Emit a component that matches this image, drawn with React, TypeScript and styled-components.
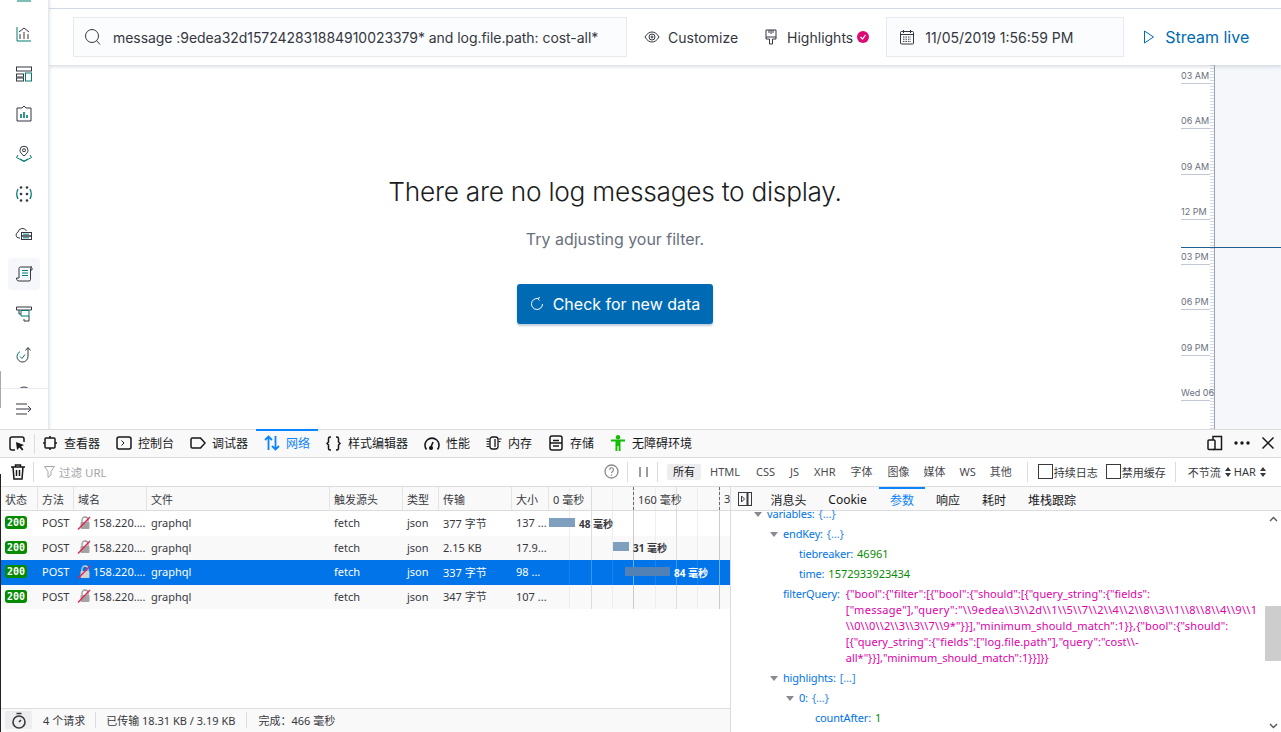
import React from "react";
import styled, { createGlobalStyle } from "styled-components";

const ui = `Inter, "Noto Sans CJK SC", sans-serif`;
const dev = `"Noto Sans", "Noto Sans CJK SC", sans-serif`;

const Global = createGlobalStyle`
  html, body { margin: 0; padding: 0; background: #fff; overflow: hidden; }
  * { box-sizing: border-box; }
`;

const Page = styled.div`
  position: relative;
  width: 1281px;
  height: 732px;
  display: flex;
  flex-direction: column;
  overflow: hidden;
`;

/* ---------- kibana ---------- */
const Kibana = styled.section`
  height: 429px;
  display: flex;
`;

const Sidebar = styled.nav`
  position: relative;
  width: 49px;
  height: 429px;
  display: flex;
  flex-direction: column;
  border-right: 1px solid #e4e7ee;
  box-shadow: 1px 0 3px rgba(152, 162, 179, 0.25);
  z-index: 3;
  background: #fff;
  &::before {
    content: "";
    position: absolute;
    left: 0;
    top: 371px;
    width: 1px;
    height: 37px;
    background: #aaa;
  }
`;

const SideList = styled.div`
  flex: 1;
  overflow: hidden;
  display: flex;
  flex-direction: column;
  align-items: center;
`;

const SideItem = styled.div<{ $active?: boolean; $first?: boolean }>`
  flex: none;
  width: 32px;
  height: 32px;
  margin-top: ${(p) => (p.$first ? "-22px" : "0")};
  margin-bottom: 8px;
  display: flex;
  align-items: center;
  justify-content: center;
  border-radius: 4px;
  background: ${(p) => (p.$active ? "#f5f7fa" : "transparent")};
`;

const SideFoot = styled.div`
  height: 41px;
  border-top: 1px solid #e9ecf2;
  display: flex;
  align-items: center;
  justify-content: center;
`;

const Content = styled.div`
  flex: 1;
  display: flex;
  flex-direction: column;
  min-width: 0;
`;

const TopGap = styled.div`
  height: 9px;
  border-bottom: 1px solid #d3dae6;
`;

const Toolbar = styled.div`
  height: 56px;
  flex: none;
  display: flex;
  align-items: center;
  padding: 0 0 0 24px;
  box-shadow: 0 2px 3px rgba(152, 162, 179, 0.35);
  z-index: 2;
  background: #fff;
  font-family: ${ui};
  font-size: 14px;
  color: #343741;
`;

const SearchBox = styled.div`
  width: 554px;
  height: 40px;
  background: #fbfcfd;
  border: 1px solid #e6e9f0;
  display: flex;
  align-items: center;
  gap: 11px;
  padding-left: 10px;
  white-space: nowrap;
  letter-spacing: -0.05px;
`;

const ToolButton = styled.div<{ $left: number }>`
  display: flex;
  align-items: center;
  margin-left: ${(p) => p.$left}px;
  gap: 8px;
  white-space: nowrap;
`;

const Dot = styled.span`
  width: 12px;
  height: 12px;
  border-radius: 50%;
  background: #dd0a73;
  margin-left: -4px;
  display: flex;
  align-items: center;
  justify-content: center;
`;

const DateBox = styled.div`
  width: 238px;
  height: 40px;
  margin-left: 17px;
  background: #fbfcfd;
  border: 1px solid #e6e9f0;
  display: flex;
  align-items: center;
  gap: 10px;
  padding-left: 12px;
  white-space: nowrap;
`;

const StreamLive = styled.div`
  display: flex;
  align-items: center;
  gap: 10px;
  margin-left: 19px;
  color: #006bb4;
  font-size: 16px;
  white-space: nowrap;
`;

const Body = styled.div`
  flex: 1;
  display: flex;
  min-height: 0;
`;

const EmptyState = styled.div`
  flex: 1;
  display: flex;
  flex-direction: column;
  align-items: center;
  padding-top: 109px;
  font-family: ${ui};
`;

const EmptyTitle = styled.h2`
  margin: 0;
  font-weight: 300;
  font-size: 26.25px;
  line-height: 36px;
  letter-spacing: -0.25px;
  color: #1a1c21;
`;

const EmptyHint = styled.p`
  margin: 17px 0 0;
  font-size: 16px;
  line-height: 24px;
  letter-spacing: -0.02px;
  color: #69707d;
`;

const PrimaryButton = styled.button`
  width: 196px;
  height: 40px;
  margin-top: 33px;
  border: 0;
  border-radius: 3px;
  background: #006bb4;
  color: #fff;
  font: 400 16px ${ui};
  display: flex;
  align-items: center;
  justify-content: center;
  gap: 9px;
  box-shadow: 0 2px 2px rgba(0, 60, 110, 0.25);
`;

const Timeline = styled.aside`
  position: relative;
  width: 100px;
  display: flex;
`;

const Ruler = styled.div`
  width: 34px;
  padding-top: 1px;
  border-right: 1px solid #98a2b3;
  background: repeating-linear-gradient(to bottom, #d3dae6 0 1px, transparent 1px 3px) right top / 4px 100% no-repeat;
  overflow: hidden;
`;

const Tick = styled.div<{ $first?: boolean }>`
  height: ${(p) => (p.$first ? "18px" : "45.3px")};
  width: 29px;
  border-bottom: 1px solid #c2c8d3;
  display: flex;
  align-items: flex-end;
  padding-bottom: 2px;
  font: 400 9px ${ui};
  color: #69707d;
  white-space: nowrap;
`;

const Minimap = styled.div`
  flex: 1;
  background: #f5f7fa;
`;

const Cursor = styled.div`
  position: absolute;
  left: 0;
  right: 0;
  top: 182px;
  height: 1px;
  background: #1f5f8f;
`;

/* ---------- devtools ---------- */
const Devtools = styled.section`
  flex: 1;
  display: flex;
  flex-direction: column;
  min-height: 0;
  border-top: 1px solid #dcdcde;
  font-family: ${dev};
  font-size: 12px;
  color: #38383d;
  position: relative;
  z-index: 4;
  background: #fff;
`;

const TabBar = styled.div`
  height: 28px;
  background: #f9f9fa;
  border-bottom: 1px solid #dcdcde;
  display: flex;
  align-items: stretch;
`;

const Picker = styled.div`
  width: 34px;
  padding-left: 9px;
  display: flex;
  align-items: center;
`;

const VRule = styled.span<{ $h?: number; $mx?: number }>`
  flex: none;
  width: 1px;
  height: ${(p) => p.$h ?? 20}px;
  background: #dcdcde;
  margin: 0 ${(p) => p.$mx ?? 0}px;
  align-self: center;
`;

const Tab = styled.div<{ $active?: boolean; $w: number }>`
  width: ${(p) => p.$w}px;
  padding: 0 0 2px 8px;
  display: flex;
  align-items: center;
  gap: 6px;
  white-space: nowrap;
  font-size: 12px;
  color: ${(p) => (p.$active ? "#0a84ff" : "#18181a")};
  border-top: 2px solid ${(p) => (p.$active ? "#0a84ff" : "transparent")};
  margin-top: -1px;
`;

const TabEnd = styled.div`
  margin-left: auto;
  display: flex;
  align-items: center;
  gap: 11px;
  padding: 0 6px 1px 0;
`;

const FilterBar = styled.div`
  position: relative;
  height: 29px;
  border-bottom: 1px solid #dcdcde;
  display: flex;
  align-items: center;
  padding: 0 0 1px 11px;
  white-space: nowrap;
  &::after {
    content: "";
    position: absolute;
    left: 0;
    bottom: -1px;
    width: 1px;
    height: 13px;
    background: #222;
  }
`;

const FilterInput = styled.div`
  width: 560px;
  margin-left: 2px;
  display: flex;
  align-items: center;
  gap: 4px;
  color: #a4a4a8;
  font-size: 11.5px;
`;

const Pill = styled.span<{ $on?: boolean; $ml?: number }>`
  margin-left: ${(p) => p.$ml ?? 0}px;
  padding: 0 6px;
  height: 16px;
  line-height: 16px;
  border-radius: 2px;
  font-size: 11px;
  background: ${(p) => (p.$on ? "#ededf0" : "transparent")};
  color: ${(p) => (p.$on ? "#18181a" : "#4a4a4f")};
`;

const Check = styled.label<{ $ml: number }>`
  margin-left: ${(p) => p.$ml}px;
  display: flex;
  align-items: center;
  gap: 1px;
  font-size: 11px;
  color: #38383d;
  &::before {
    content: "";
    flex: none;
    width: 13px;
    height: 13px;
    border: 1px solid #38383d;
    background: #fff;
  }
`;

const Throttle = styled.span<{ $ml: number }>`
  margin-left: ${(p) => p.$ml}px;
  display: flex;
  align-items: center;
  gap: 4px;
  font-size: 11px;
`;

const Split = styled.div`
  flex: 1;
  display: flex;
  min-height: 0;
`;

const Requests = styled.div`
  width: 731px;
  flex: none;
  display: flex;
  flex-direction: column;
  border-right: 1px solid #dcdcde;
  border-left: 1px solid #222;
`;

const cols = "37px 36px 73px 183px 73px 36px 73px 37px 1fr";

const HeadRow = styled.div`
  height: 24px;
  flex: none;
  display: grid;
  grid-template-columns: ${cols};
  background: #f9f9fa;
  border-bottom: 1px solid #dcdcde;
  font-size: 11px;
`;

const HeadCell = styled.div`
  padding-left: 4px;
  display: flex;
  align-items: center;
  border-right: 1px solid #e4e4e6;
  white-space: nowrap;
  overflow: hidden;
`;

const Gridlines = styled.div<{ $sel?: boolean }>`
  position: relative;
  overflow: hidden;
  display: flex;
  align-items: center;
  height: 100%;
  min-width: 0;
  background:
    repeating-linear-gradient(to right, transparent 0 41.67px, ${(p) => (p.$sel ? "rgba(255,255,255,.16)" : "#dcdcdc")} 41.67px 42.67px),
    repeating-linear-gradient(to right, transparent 0 20.33px, ${(p) => (p.$sel ? "rgba(255,255,255,.1)" : "#eeeeee")} 20.33px 21.33px);
`;

const Mark = styled.span<{ $x: number; $head?: boolean; $sel?: boolean }>`
  position: absolute;
  top: 0;
  bottom: 0;
  left: ${(p) => p.$x}px;
  border-left: 1px ${(p) => (p.$head ? "dashed #6a6a6f" : p.$sel ? "solid rgba(255,255,255,.25)" : "solid #cccccc")};
`;

const TimeLabel = styled.span<{ $x: number }>`
  position: absolute;
  left: ${(p) => p.$x}px;
  top: 0;
  bottom: 0;
  padding-left: 4px;
  display: flex;
  align-items: center;
  white-space: nowrap;
`;

const Rows = styled.div`
  flex: 1;
  min-height: 0;
`;

const Row = styled.div<{ $sel?: boolean; $alt?: boolean }>`
  height: 24.5px;
  display: grid;
  grid-template-columns: ${cols};
  align-items: stretch;
  font-size: 11px;
  color: ${(p) => (p.$sel ? "#fff" : "#38383d")};
  background: ${(p) => (p.$sel ? "#0074e8" : p.$alt ? "#f9f9fa" : "#fff")};
`;

const Cell = styled.div<{ $flush?: boolean }>`
  padding: 0 0 1px ${(p) => (p.$flush ? 0 : 4)}px;
  display: flex;
  align-items: center;
  white-space: nowrap;
  overflow: hidden;
  min-width: 0;
`;

const Status = styled.span`
  width: 22px;
  height: 13px;
  border-radius: 3px;
  background: #058b00;
  color: #fff;
  font: 700 10px "DejaVu Sans Mono", monospace;
  line-height: 13px;
  text-align: center;
`;

const Bar = styled.span<{ $x: number; $w: number; $sel?: boolean }>`
  position: relative;
  flex: none;
  width: ${(p) => p.$w}px;
  height: 9px;
  margin-left: ${(p) => p.$x}px;
  margin-top: -2px;
  background: ${(p) => (p.$sel ? "#5281b6" : "#7f9fbf")};
`;

const BarLabel = styled.span<{ $sel?: boolean }>`
  position: relative;
  margin-left: 4px;
  font-size: 10px;
  font-weight: 700;
  color: ${(p) => (p.$sel ? "#fff" : "#38383d")};
`;

const Footer = styled.div`
  height: 24px;
  flex: none;
  background: #f9f9fa;
  border-top: 1px solid #dcdcde;
  display: flex;
  align-items: center;
  font-size: 11px;
  padding: 0 0 1px 4px;
  white-space: nowrap;
`;

const Watch = styled.span`
  width: 27px;
  height: 18px;
  background: #ededf0;
  border-radius: 2px;
  display: flex;
  align-items: center;
  justify-content: center;
  margin-right: 11px;
`;

const Details = styled.div`
  flex: 1;
  min-width: 0;
  display: flex;
  flex-direction: column;
`;

const DetailTabs = styled.div`
  height: 24px;
  flex: none;
  background: #f9f9fa;
  border-bottom: 1px solid #dcdcde;
  display: flex;
  align-items: stretch;
  font-size: 12px;
  padding-left: 7px;
`;

const DetailTab = styled.div<{ $active?: boolean; $w: number }>`
  width: ${(p) => p.$w}px;
  display: flex;
  align-items: center;
  justify-content: center;
  color: ${(p) => (p.$active ? "#0a84ff" : "#18181a")};
  border-top: 2px solid ${(p) => (p.$active ? "#0a84ff" : "transparent")};
  white-space: nowrap;
`;

const TreeWrap = styled.div`
  flex: 1;
  display: flex;
  min-height: 0;
`;

const Tree = styled.div`
  flex: 1;
  overflow: hidden;
  font-size: 11px;
  margin-top: -7px;
`;

const Scroll = styled.div`
  width: 16px;
  display: flex;
  flex-direction: column;
  align-items: center;
  padding: 5px 0 3px;
`;

const Thumb = styled.div`
  width: 16px;
  height: 55px;
  margin: 84px 0 auto;
  background: #cdcdcd;
`;

const TreeRow = styled.div<{ $level: number }>`
  display: flex;
  align-items: flex-start;
  padding: 2px 0 2px ${(p) => 23 + p.$level * 16}px;
  line-height: 16px;
  white-space: nowrap;
`;

const Twisty = styled.span<{ $open?: boolean }>`
  flex: none;
  width: 13px;
  height: 16px;
  display: flex;
  align-items: center;
  &::before {
    content: "";
    display: ${(p) => (p.$open ? "block" : "none")};
    border-left: 4px solid transparent;
    border-right: 4px solid transparent;
    border-top: 5px solid #8a8a8e;
  }
`;

const Key = styled.span`
  color: #0074e8;
  margin-right: 4px;
  letter-spacing: -0.18px;
`;

const Num = styled.span`
  color: #058b00;
`;

const Json = styled.span`
  color: #dd00a9;
  margin-left: 2px;
`;

const Brace = styled.span`
  color: #2f86ec;
`;

const JsonLine = styled.div<{ $sp: number }>`
  letter-spacing: ${(p) => p.$sp}px;
`;

/* ---------- icons ---------- */
const D = "#343741";
const T = "#017d73";

type Ic = { children: React.ReactNode; s?: number; vb?: number };
const Svg = ({ children, s = 18, vb = 18 }: Ic) => (
  <svg width={s} height={s} viewBox={`0 0 ${vb} ${vb}`} fill="none" stroke={D} strokeWidth="1">
    {children}
  </svg>
);

const sideIcons: React.ReactNode[] = [
  <Svg key="a"><circle cx="9" cy="6" r="5" /><path d="M2 16h14" stroke={T} /></Svg>,
  <Svg key="b"><path d="M2 2v14h14" stroke={T} /><path d="M5 14V9M9 14V7M13 14V9M4 7l5-4 5 4" /></Svg>,
  <Svg key="c"><rect x="1.5" y="2" width="15" height="4" /><rect x="1.5" y="9" width="7" height="3" /><rect x="1.5" y="13" width="7" height="3" /><rect x="10.5" y="8" width="6" height="8" stroke={T} /></Svg>,
  <Svg key="d"><path d="M9 1l2 2h5v13H2V3h5z" /><path d="M6 13V9M9 13V7M12 13v-3" stroke={T} strokeWidth="1.6" /></Svg>,
  <Svg key="e"><path d="M9 11C6 8.5 5 7 5 5.2a4 4 0 018 0C13 7 12 8.5 9 11z" /><circle cx="9" cy="5.2" r="1.5" /><path d="M3 10L1.5 12.5 9 16.5l7.5-4L15 10M5 14l4 2 4-2" stroke={T} /></Svg>,
  <Svg key="f"><g fill={D} stroke="none"><circle cx="6" cy="2.5" r="1.3" /><circle cx="12" cy="2.5" r="1.3" /><circle cx="6" cy="9" r="1.3" /><circle cx="12" cy="9" r="1.3" /><circle cx="6" cy="15.5" r="1.3" /><circle cx="12" cy="15.5" r="1.3" /></g><path d="M3 4C1.500 7 1.500 11 3 14M15 4c1.500 3 1.500 7 0 10" stroke={T} strokeWidth="1.3" /></Svg>,
  <Svg key="g"><path d="M5 13H4a3 3 0 01-1-5.800A4.500 4.500 0 0111.500 6" /><rect x="6.5" y="7.5" width="10" height="3.5" /><rect x="6.5" y="11" width="10" height="3.5" /><path d="M8 9.2h6M8 12.8h6" stroke={T} /></Svg>,
  <Svg key="h"><path d="M4 16h10a1.500 1.500 0 001.500-1.500V3.500A1.500 1.500 0 0117 2H5.500A1.500 1.500 0 004 3.500V13H1.500c0 2 1 3 2.500 3zM15.500 5H17V3" /><path d="M7 5.500h6M7 8h6M7 10.500h6" stroke={T} /></Svg>,
  <Svg key="i"><path d="M1.500 2h15v3h-15zM4 5v4h2" /><path d="M6 5.500h8v5.500H6z" stroke={T} /><path d="M14 11v5H9v-2" /></Svg>,
  <Svg key="j"><path d="M13 3v8.500a5.500 5.500 0 01-11 0" /><path d="M2 11.500a5.500 5.500 0 013-4.900" stroke={T} /><path d="M10.500 5.500L13 2.500l2.500 3" /><path d="M5 11.500l2 2 3-4" stroke={T} /></Svg>,
  <Svg key="k"><circle cx="9" cy="9" r="7" /></Svg>,
];

const Search = () => (
  <Svg s={18}>
    <circle cx="8" cy="8" r="6.5" />
    <path d="M12.5 12.5l3.500 4" />
  </Svg>
);

const LockOff = ({ sel }: { sel?: boolean }) => (
  <svg width="15" height="14" viewBox="0 0 15 14" style={{ flex: "none", marginRight: 1, marginLeft: 3 }}>
    <path d="M5 6V4a3 3 0 016 0v2" fill="none" stroke={sel ? "#d0d0d0" : "#9a9a9a"} strokeWidth="1.3" />
    <rect x="3.5" y="6" width="9" height="7" rx="1" fill={sel ? "#d0d0d0" : "#a3a3a3"} />
    <path d="M1 13.5L13 1" stroke="#e22850" strokeWidth="1.4" />
  </svg>
);

const Tools = {
  inspector: (
    <svg width="15" height="14" viewBox="0 0 15 14" fill="none" stroke="#18181a" strokeWidth="1.500"><rect x="2" y="2" width="10" height="10" rx="1" /><path d="M7 0v2M7 12v2M0 7h2M12 7h2" /></svg>
  ),
  console: (
    <svg width="16" height="14" viewBox="0 0 16 14" fill="none" stroke="#18181a" strokeWidth="1.500"><rect x="1" y="1" width="14" height="12" rx="2" /><path d="M5.500 4.500L8 7l-2.500 2.500" strokeWidth="1" /></svg>
  ),
  debugger: (
    <svg width="16" height="12" viewBox="0 0 16 12" fill="none" stroke="#18181a" strokeWidth="1.500"><path d="M2.500 1h8L15 6l-4.500 5h-8A1.500 1.500 0 011 9.500v-7A1.500 1.500 0 012.500 1z" /></svg>
  ),
  network: (
    <svg width="16" height="16" viewBox="0 0 16 16" fill="none" stroke="#0a84ff" strokeWidth="1.800"><path d="M4.500 15V2M1 5l3.500-3.500L8 5M11.500 1v13M8 11l3.500 3.500L15 11" /></svg>
  ),
  style: (
    <svg width="16" height="15" viewBox="0 0 16 15" fill="none" stroke="#18181a" strokeWidth="1.500"><path d="M5 1H4C2.500 1 2.500 2 2.500 3v3L1 7.500 2.500 9v3c0 1 0 2 1.500 2h1M10 1h1c1.500 0 1.500 1 1.500 2v3L14 7.500 12.500 9v3c0 1 0 2-1.500 2h-1" /></svg>
  ),
  perf: (
    <svg width="16" height="15" viewBox="0 0 16 15" fill="none" stroke="#18181a" strokeWidth="1.600"><path d="M2.500 13.500A7 7 0 1113.500 13.500" /><path d="M7 11l2-5" /><circle cx="7" cy="12" r="1.300" fill="#18181a" /></svg>
  ),
  memory: (
    <svg width="16" height="14" viewBox="0 0 16 14" fill="none" stroke="#18181a" strokeWidth="1.300"><rect x="4" y="1" width="8" height="12" rx="2.500" /><path d="M9 3v8" /><path d="M0.500 3h3M0.500 5.500h3M0.500 8h3M0.500 10.500h3M12.500 3h3M12.500 5.500h2" strokeWidth="1" /></svg>
  ),
  storage: (
    <svg width="15" height="16" viewBox="0 0 15 16" fill="none" stroke="#18181a" strokeWidth="1.500"><rect x="1" y="1" width="12" height="14" rx="2" /><path d="M4 5.500h6M1 8h12M4 11h6" /></svg>
  ),
  a11y: (
    <svg width="15" height="16" viewBox="0 0 15 16" fill="#12bc00"><circle cx="7" cy="2.200" r="2.200" /><path d="M0 4.500h14v2h-4.500V16H7.600v-5H6.400v5H4.500V6.500H0z" /></svg>
  ),
};

const UpDown = () => (
  <svg width="6" height="10" viewBox="0 0 6 10" fill="#38383d"><path d="M3 0l3 4H0zM3 10L0 6h6z" /></svg>
);

const Chevron = ({ down }: { down?: boolean }) => (
  <svg width="9" height="6" viewBox="0 0 9 6" fill="none" stroke="#555" strokeWidth="1.400">
    <path d={down ? "M1 1l3.500 3.500L8 1" : "M1 5l3.500-3.500L8 5"} />
  </svg>
);

const waterfall = [
  { x: 0, w: 26, label: "48 毫秒" },
  { x: 64, w: 16, label: "31 毫秒" },
  { x: 76, w: 45, label: "84 毫秒" },
  null,
];

const sizes = ["137 ...", "17.9...", "98 ...", "107 ..."];
const transfers = ["377 字节", "2.15 KB", "337 字节", "347 字节"];
const ticks = ["03 AM", "06 AM", "09 AM", "12 PM", "03 PM", "06 PM", "09 PM", "Wed 06"];

const App: React.FC = () => (
  <Page>
    <Global />
    <Kibana>
      <Sidebar>
        <SideList>
          {sideIcons.map((icon, i) => (
            <SideItem key={i} $first={i === 0} $active={i === 7}>
              {icon}
            </SideItem>
          ))}
        </SideList>
        <SideFoot>
          <Svg>
            <path d="M1 4h11M1 9h15M1 14h11M13 6l3 3-3 3" />
          </Svg>
        </SideFoot>
      </Sidebar>
      <Content>
        <TopGap />
        <Toolbar>
          <SearchBox>
            <Search />
            <span>message :9edea32d157242831884910023379* and log.file.path: cost-all*</span>
          </SearchBox>
          <ToolButton $left={17}>
            <Svg s={16} vb={16}>
              <path d="M1 8c2-3.500 4.500-5 7-5s5 1.500 7 5c-2 3.500-4.500 5-7 5s-5-1.500-7-5z" />
              <circle cx="8" cy="8" r="3" />
              <circle cx="8" cy="8" r="1" />
            </Svg>
            <span>Customize</span>
          </ToolButton>
          <ToolButton $left={25}>
            <Svg s={16} vb={16}>
              <path d="M3 1h10v7H3zM3 8v2h3.500v5h3v-5H13V8M6 1v3M8 1v4M10 1v3" />
            </Svg>
            <span>Highlights</span>
            <Dot>
              <svg width="8" height="8" viewBox="0 0 8 8" fill="none" stroke="#fff" strokeWidth="1.200">
                <path d="M1.500 4l2 2 3-4" />
              </svg>
            </Dot>
          </ToolButton>
          <DateBox>
            <Svg s={16} vb={16}>
              <rect x="1.5" y="2.5" width="13" height="12.5" rx="1" />
              <path d="M1.500 5.500h13M4.500 1v3M11.500 1v3" />
              <path d="M4 8h8M4 10.200h8M4 12.400h8" strokeDasharray="1.500 1" />
            </Svg>
            <span>11/05/2019 1:56:59 PM</span>
          </DateBox>
          <StreamLive>
            <svg width="12" height="14" viewBox="0 0 12 14" fill="none" stroke="#006bb4">
              <path d="M1.500 1l9 6-9 6z" />
            </svg>
            <span>Stream live</span>
          </StreamLive>
        </Toolbar>
        <Body>
          <EmptyState>
            <EmptyTitle>There are no log messages to display.</EmptyTitle>
            <EmptyHint>Try adjusting your filter.</EmptyHint>
            <PrimaryButton>
              <svg width="14" height="14" viewBox="0 0 14 14" fill="none" stroke="#fff">
                <path d="M12.500 7A5.500 5.500 0 117.500 1.500M7.500 1.500L10 .5M7.500 1.500L9.500 3.500" />
              </svg>
              Check for new data
            </PrimaryButton>
          </EmptyState>
          <Timeline>
            <Ruler>
              {ticks.map((t, i) => (
                <Tick key={t} $first={i === 0}>
                  {t}
                </Tick>
              ))}
            </Ruler>
            <Minimap />
            <Cursor />
          </Timeline>
        </Body>
      </Content>
    </Kibana>

    <Devtools>
      <TabBar>
        <Picker>
          <svg width="16" height="16" viewBox="0 0 16 16" fill="none" stroke="#18181a" strokeWidth="1.500">
            <path d="M6 14H3a2 2 0 01-2-2V3a2 2 0 012-2h10a2 2 0 012 2v3" />
            <path d="M7 6l8 3-3 1.500 2.500 3-1.500 1-2.500-3L8 14z" fill="#18181a" stroke="none" />
          </svg>
        </Picker>
        <VRule />
        <Tab $w={73}>{Tools.inspector}查看器</Tab>
        <Tab $w={74}>{Tools.console}控制台</Tab>
        <Tab $w={74}>{Tools.debugger}调试器</Tab>
        <Tab $w={62} $active>
          {Tools.network}网络
        </Tab>
        <Tab $w={98}>{Tools.style}样式编辑器</Tab>
        <Tab $w={62}>{Tools.perf}性能</Tab>
        <Tab $w={63}>{Tools.memory}内存</Tab>
        <Tab $w={62}>{Tools.storage}存储</Tab>
        <Tab $w={97}>{Tools.a11y}无障碍环境</Tab>
        <TabEnd>
          <svg width="16" height="16" viewBox="0 0 16 16" fill="none" stroke="#18181a" strokeWidth="1.500">
            <path d="M6 5V1.500h8.500v13H6" />
            <rect x="1" y="5" width="7" height="9.500" rx="1" />
          </svg>
          <svg width="16" height="4" viewBox="0 0 16 4" fill="#18181a">
            <circle cx="2" cy="2" r="1.700" />
            <circle cx="8" cy="2" r="1.700" />
            <circle cx="14" cy="2" r="1.700" />
          </svg>
          <svg width="14" height="14" viewBox="0 0 14 14" fill="none" stroke="#18181a" strokeWidth="1.500">
            <path d="M1.500 1.500l11 11M12.500 1.500l-11 11" />
          </svg>
        </TabEnd>
      </TabBar>

      <FilterBar>
        <svg width="14" height="16" viewBox="0 0 14 16" fill="none" stroke="#18181a" strokeWidth="1.500" style={{ flex: "none" }}>
          <path d="M0 3h14M4.500 3V1h5v2M2 3l1 12h8l1-12M5.500 6v6M8.500 6v6" />
        </svg>
        <VRule $h={20} $mx={8} />
        <FilterInput>
          <svg width="11" height="12" viewBox="0 0 11 12" fill="none" stroke="#a4a4a8">
            <path d="M.5.500h10L7 5.500V9l-3 2.500v-6z" />
          </svg>
          过滤 URL
        </FilterInput>
        <svg width="15" height="15" viewBox="0 0 15 15" fill="none" stroke="#8a8a8e" style={{ flex: "none" }}>
          <circle cx="7.5" cy="7.5" r="6.5" strokeWidth="1.3" />
          <path d="M5.500 5.800a2 2 0 113 1.700c-.7.4-1 .8-1 1.500M7.500 10.500v1.200" strokeWidth="1.2" />
        </svg>
        <VRule $h={20} $mx={8} />
        <svg width="9" height="10" viewBox="0 0 9 10" stroke="#38383d" style={{ flex: "none", marginLeft: 3 }}>
          <path d="M1 0v10M8 0v10" />
        </svg>
        <VRule $h={20} $mx={9} />
        <Pill $on>所有</Pill>
        <Pill $ml={3}>HTML</Pill>
        <Pill $ml={4}>CSS</Pill>
        <Pill $ml={3}>JS</Pill>
        <Pill $ml={3}>XHR</Pill>
        <Pill $ml={3}>字体</Pill>
        <Pill $ml={3}>图像</Pill>
        <Pill $ml={2}>媒体</Pill>
        <Pill $ml={2}>WS</Pill>
        <Pill $ml={2}>其他</Pill>
        <VRule $h={20} $mx={9} />
        <Check $ml={1}>持续日志</Check>
        <Check $ml={8}>禁用缓存</Check>
        <VRule $h={20} $mx={9} />
        <Throttle $ml={3}>
          不节流 <UpDown />
        </Throttle>
        <Throttle $ml={3}>
          HAR <UpDown />
        </Throttle>
      </FilterBar>

      <Split>
        <Requests>
          <HeadRow>
            {["状态", "方法", "域名", "文件", "触发源头", "类型", "传输", "大小"].map((h) => (
              <HeadCell key={h}>{h}</HeadCell>
            ))}
            <Gridlines>
              <Mark $x={84} $head />
              <Mark $x={170} $head />
              <TimeLabel $x={0}>0 毫秒</TimeLabel>
              <TimeLabel $x={85}>160 毫秒</TimeLabel>
              <TimeLabel $x={171}>3</TimeLabel>
            </Gridlines>
          </HeadRow>
          <Rows>
            {waterfall.map((w, i) => (
              <Row key={i} $alt={i % 2 === 1} $sel={i === 2}>
                <Cell>
                  <Status>200</Status>
                </Cell>
                <Cell>POST</Cell>
                <Cell $flush>
                  <LockOff sel={i === 2} />
                  158.220....
                </Cell>
                <Cell>graphql</Cell>
                <Cell>fetch</Cell>
                <Cell>json</Cell>
                <Cell>{transfers[i]}</Cell>
                <Cell>{sizes[i]}</Cell>
                <Gridlines $sel={i === 2}>
                  <Mark $x={84} $sel={i === 2} />
                  <Mark $x={170} $sel={i === 2} />
                  {w && <Bar $x={w.x} $w={w.w} $sel={i === 2} />}
                  {w && <BarLabel $sel={i === 2}>{w.label}</BarLabel>}
                </Gridlines>
              </Row>
            ))}
          </Rows>
          <Footer>
            <Watch>
              <svg width="16" height="17" viewBox="0 0 16 17" fill="none" stroke="#38383d" strokeWidth="1.600">
                <circle cx="8" cy="10" r="6" />
                <path d="M5.500 1.500h5M8 10l2-2" />
              </svg>
            </Watch>
            <span>4 个请求</span>
            <VRule $h={16} $mx={10} />
            <span>已传输 18.31 KB / 3.19 KB</span>
            <VRule $h={16} $mx={11} />
            <span>完成：466 毫秒</span>
          </Footer>
        </Requests>

        <Details>
          <DetailTabs>
            <svg width="14" height="14" viewBox="0 0 14 14" fill="none" stroke="#38383d" style={{ alignSelf: "center", marginRight: 9 }}>
              <rect x=".5" y=".5" width="13" height="13" />
              <path d="M9.500 .5v13" strokeWidth="2" />
              <path d="M3.500 4l3 3-3 3z" />
            </svg>
            <DetailTab $w={55}>消息头</DetailTab>
            <DetailTab $w={63}>Cookie</DetailTab>
            <DetailTab $w={46} $active>
              参数
            </DetailTab>
            <DetailTab $w={46}>响应</DetailTab>
            <DetailTab $w={46}>耗时</DetailTab>
            <DetailTab $w={70}>堆栈跟踪</DetailTab>
          </DetailTabs>
          <TreeWrap>
            <Tree>
              <TreeRow $level={0}>
                <Twisty $open />
                <Key>variables:</Key>
                <Brace>{"{…}"}</Brace>
              </TreeRow>
              <TreeRow $level={1}>
                <Twisty $open />
                <Key>endKey:</Key>
                <Brace>{"{…}"}</Brace>
              </TreeRow>
              <TreeRow $level={2}>
                <Twisty />
                <Key>tiebreaker:</Key>
                <Num>46961</Num>
              </TreeRow>
              <TreeRow $level={2}>
                <Twisty />
                <Key>time:</Key>
                <Num>1572933923434</Num>
              </TreeRow>
              <TreeRow $level={1}>
                <Twisty />
                <Key>filterQuery:</Key>
                <Json>
                  <JsonLine $sp={0.05}>{`{"bool":{"filter":[{"bool":{"should":[{"query_string":{"fields":`}</JsonLine>
                  <JsonLine $sp={0.29}>{`["message"],"query":"\\\\9edea\\\\3\\\\2d\\\\1\\\\5\\\\7\\\\2\\\\4\\\\2\\\\8\\\\3\\\\1\\\\8\\\\8\\\\4\\\\9\\\\1`}</JsonLine>
                  <JsonLine $sp={0.13}>{`\\\\0\\\\0\\\\2\\\\3\\\\3\\\\7\\\\9*"}}],"minimum_should_match":1}},{"bool":{"should":`}</JsonLine>
                  <JsonLine $sp={0.1}>{`[{"query_string":{"fields":["log.file.path"],"query":"cost\\\\-`}</JsonLine>
                  <JsonLine $sp={0}>{`all*"}}],"minimum_should_match":1}}]}}`}</JsonLine>
                </Json>
              </TreeRow>
              <TreeRow $level={1}>
                <Twisty $open />
                <Key>highlights:</Key>
                <Brace>{"[…]"}</Brace>
              </TreeRow>
              <TreeRow $level={2}>
                <Twisty $open />
                <Key>0:</Key>
                <Brace>{"{…}"}</Brace>
              </TreeRow>
              <TreeRow $level={3}>
                <Twisty />
                <Key>countAfter:</Key>
                <Num>1</Num>
              </TreeRow>
            </Tree>
            <Scroll>
              <Chevron />
              <Thumb />
              <Chevron down />
            </Scroll>
          </TreeWrap>
        </Details>
      </Split>
    </Devtools>
  </Page>
);

export default App;
